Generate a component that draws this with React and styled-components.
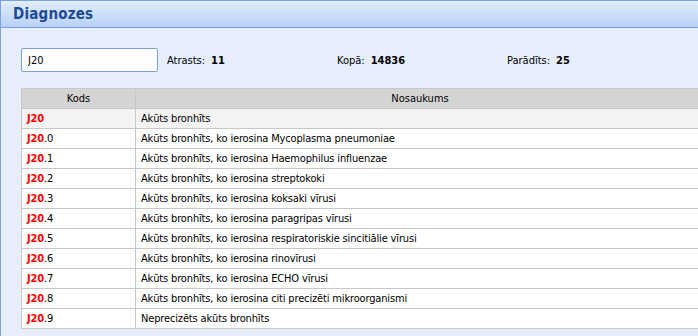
import React from "react";
import styled, { createGlobalStyle } from "styled-components";

const Global = createGlobalStyle`
  html, body { margin: 0; padding: 0; overflow: hidden; background: #e6eefc; }
  body { font-family: "DejaVu Sans Condensed", "DejaVu Sans", sans-serif; font-size: 11px; color: #000; }
`;

const Panel = styled.div`
  width: 720px;
  height: 336px;
  border-left: 1px solid #7ba2da;
  border-top: 1px solid #7ba2da;
  background: #e6eefc;
  box-sizing: border-box;
`;

const Header = styled.div`
  height: 26px;
  background: linear-gradient(#e3edfc, #b7d1f5);
  border-bottom: 1px solid #7ba2da;
  display: flex;
  align-items: center;
  padding-left: 12px;
`;

const Title = styled.h1`
  margin: 0;
  font-size: 15px;
  font-weight: bold;
  color: #1d4b95;
  letter-spacing: 0.2px;
`;

const Body = styled.div`
  padding: 20px 0 0 20px;
`;

const Toolbar = styled.div`
  display: flex;
  align-items: center;
  height: 24px;
`;

const Search = styled.input`
  box-sizing: border-box;
  width: 137px;
  height: 24px;
  border: 1px solid #7c9fd6;
  border-radius: 2px;
  padding: 0 6px;
  font: inherit;
  font-size: 11px;
  background: #fff;
  outline: none;
  margin-right: 9px;
`;

const Stat = styled.div`
  width: 170px;
  display: flex;
  gap: 6px;
  white-space: nowrap;
`;

const StatValue = styled.b`
  font-weight: bold;
`;

const Table = styled.table`
  margin-top: 16px;
  width: 684px;
  border-collapse: collapse;
  table-layout: fixed;
  border: 1px solid #c8c8c8;
`;

const Th = styled.th`
  height: 19px;
  background: #d4d4d4;
  font-weight: normal;
  text-align: center;
  border: 1px solid #c8c8c8;
  border-top: 0;
  padding: 0;
  width: ${(p) => p.$w || "auto"};
`;

const Tr = styled.tr`
  background: ${(p) => (p.$active ? "#f3f3f3" : "#fff")};
`;

const Td = styled.td`
  height: 19px;
  border: 1px solid #c8c8c8;
  padding: 0 0 0 5px;
  white-space: nowrap;
  overflow: hidden;
  letter-spacing: -0.15px;
`;

const Match = styled.span`
  color: #f00;
  font-weight: bold;
`;

const rows = [
  ["", "Akūts bronhīts"],
  [".0", "Akūts bronhīts, ko ierosina Mycoplasma pneumoniae"],
  [".1", "Akūts bronhīts, ko ierosina Haemophilus influenzae"],
  [".2", "Akūts bronhīts, ko ierosina streptokoki"],
  [".3", "Akūts bronhīts, ko ierosina koksaki vīrusi"],
  [".4", "Akūts bronhīts, ko ierosina paragripas vīrusi"],
  [".5", "Akūts bronhīts, ko ierosina respiratoriskie sincitiālie vīrusi"],
  [".6", "Akūts bronhīts, ko ierosina rinovīrusi"],
  [".7", "Akūts bronhīts, ko ierosina ECHO vīrusi"],
  [".8", "Akūts bronhīts, ko ierosina citi precizēti mikroorganismi"],
  [".9", "Neprecizēts akūts bronhīts"],
];

export default function App() {
  return (
    <>
      <Global />
      <Panel>
        <Header>
          <Title>Diagnozes</Title>
        </Header>
        <Body>
          <Toolbar>
            <Search defaultValue="J20" />
            <Stat>
              Atrasts: <StatValue>11</StatValue>
            </Stat>
            <Stat>
              Kopā: <StatValue>14836</StatValue>
            </Stat>
            <Stat>
              Parādīts: <StatValue>25</StatValue>
            </Stat>
          </Toolbar>
          <Table>
            <thead>
              <tr>
                <Th $w="113px">Kods</Th>
                <Th>Nosaukums</Th>
              </tr>
            </thead>
            <tbody>
              {rows.map(([suffix, name], i) => (
                <Tr key={i} $active={i === 0}>
                  <Td>
                    <Match>J20</Match>
                    {suffix}
                  </Td>
                  <Td>{name}</Td>
                </Tr>
              ))}
            </tbody>
          </Table>
        </Body>
      </Panel>
    </>
  );
}
